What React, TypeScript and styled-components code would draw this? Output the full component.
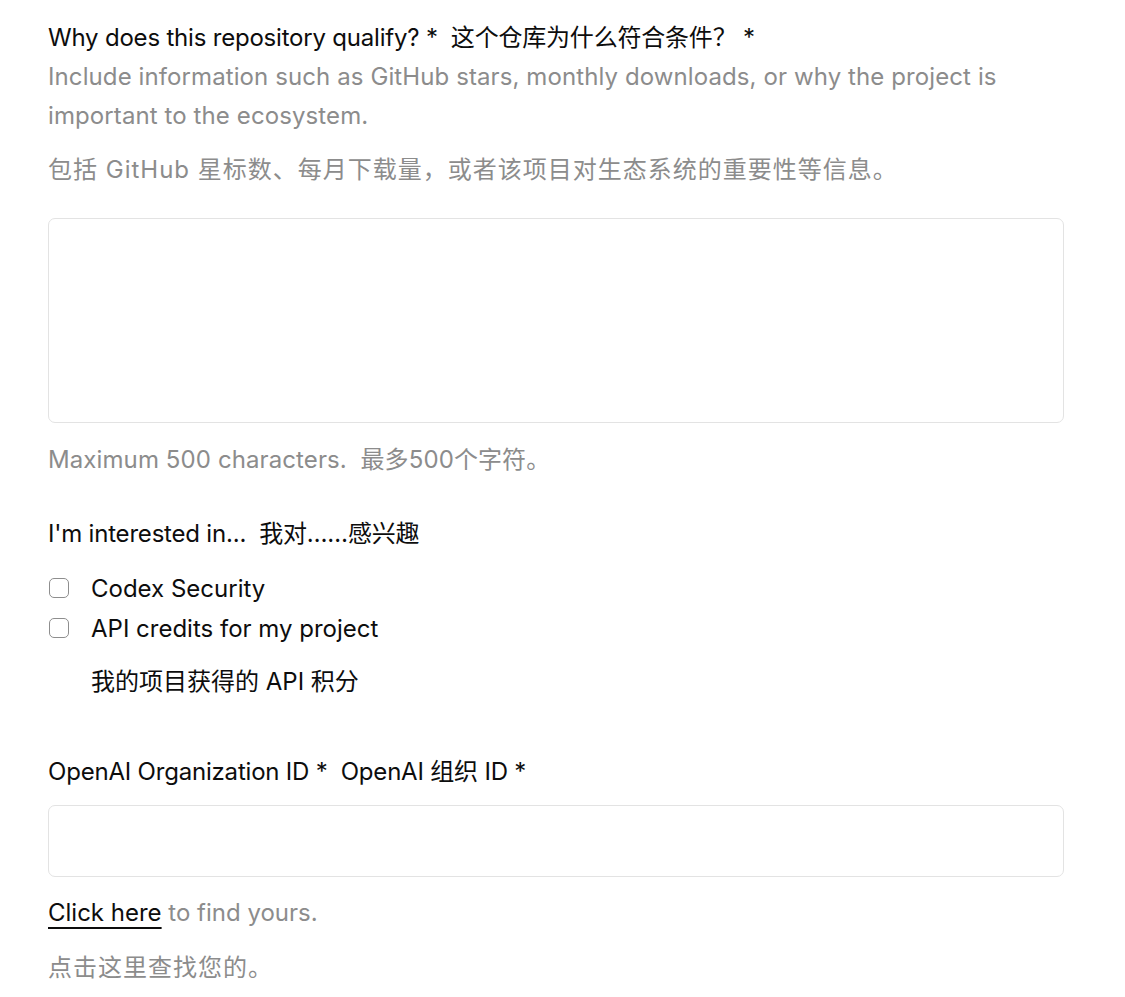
import React from "react";
import styled, { createGlobalStyle } from "styled-components";

const Global = createGlobalStyle`
  html, body { margin: 0; padding: 0; background: #ffffff; }
  body { font-family: Inter, "Noto Sans CJK SC", sans-serif; color: #0d0d0d; }
`;

const Page = styled.div`
  padding: 18px 61px 0 48px;
  display: flex;
  flex-direction: column;
`;

const Label = styled.div<{ $mt?: number }>`
  font-size: 24px;
  line-height: 39px;
  color: #0d0d0d;
  margin-top: ${(p) => p.$mt ?? 0}px;
  letter-spacing: -0.2px;
  white-space: nowrap;
`;

const Hint = styled.div<{ $mt?: number; $cjk?: boolean }>`
  font-size: 24px;
  line-height: 39px;
  color: #8c8c8c;
  margin-top: ${(p) => p.$mt ?? 0}px;
  letter-spacing: ${(p) => (p.$cjk ? "1px" : "0.1px")};
  white-space: nowrap;
`;

const TextArea = styled.textarea`
  box-sizing: border-box;
  width: 100%;
  height: 205px;
  border: 1.5px solid #e3e3e3;
  border-radius: 7px;
  resize: none;
  margin-top: 29px;
  font: inherit;
  outline: none;
`;

const Input = styled.input`
  box-sizing: border-box;
  width: 100%;
  height: 72px;
  border: 1.5px solid #e3e3e3;
  border-radius: 7px;
  margin-top: 14px;
  font: inherit;
  outline: none;
`;

const Options = styled.div`
  display: flex;
  flex-direction: column;
  margin-top: 15px;
`;

const OptionRow = styled.label`
  display: flex;
  align-items: center;
  gap: 22px;
  height: 40px;
  font-size: 24px;
  color: #0d0d0d;
`;

const Box = styled.span`
  box-sizing: border-box;
  width: 20px;
  height: 20px;
  margin-left: 1px;
  border: 1.5px solid #8e8e8e;
  border-radius: 5px;
  flex: none;
`;

const SubNote = styled.div`
  font-size: 24px;
  line-height: 39px;
  color: #0d0d0d;
  padding-left: 43px;
  margin-top: 14px;
`;

const LinkLine = styled.div`
  font-size: 24px;
  line-height: 39px;
  color: #8c8c8c;
  margin-top: 16px;
`;

const Link = styled.a`
  color: #0d0d0d;
  text-decoration: underline;
  text-decoration-thickness: 2px;
  text-underline-offset: 6px;
`;

export default function App() {
  return (
    <>
      <Global />
      <Page>
        <Label>Why does this repository qualify? *&nbsp; 这个仓库为什么符合条件？ *</Label>
        <Hint>
          Include information such as GitHub stars, monthly downloads, or why the project is
          <br />
          important to the ecosystem.
        </Hint>
        <Hint $mt={15} $cjk>包括 GitHub 星标数、每月下载量，或者该项目对生态系统的重要性等信息。</Hint>
        <TextArea />
        <Hint $mt={17}>Maximum 500 characters.&nbsp; 最多500个字符。</Hint>
        <Label $mt={35}>I'm interested in...&nbsp; 我对……感兴趣</Label>
        <Options>
          <OptionRow>
            <Box />
            Codex Security
          </OptionRow>
          <OptionRow>
            <Box />
            API credits for my project
          </OptionRow>
        </Options>
        <SubNote>我的项目获得的 API 积分</SubNote>
        <Label $mt={51}>OpenAI Organization ID *&nbsp; OpenAI 组织 ID *</Label>
        <Input />
        <LinkLine>
          <Link>Click here</Link> to find yours.
        </LinkLine>
        <Hint $mt={16} $cjk>点击这里查找您的。</Hint>
      </Page>
    </>
  );
}
